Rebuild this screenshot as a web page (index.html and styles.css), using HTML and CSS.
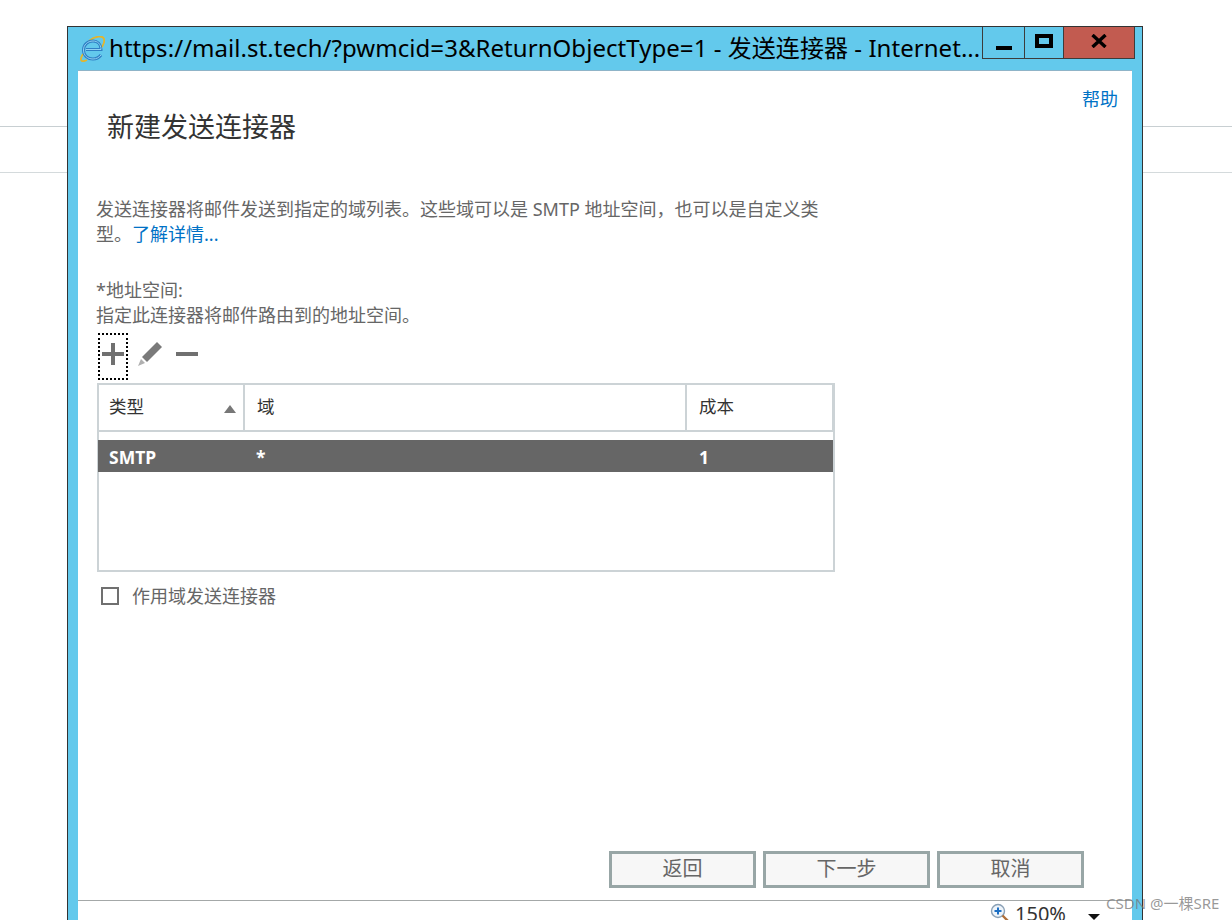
FILE: index.html
```html
<!DOCTYPE html>
<html lang="zh">
<head>
    <meta charset="UTF-8">
    <title>新建发送连接器</title>
    <link rel="stylesheet" href="styles.css">
</head>
<body>
    <div class="backdrop"></div>

    <div class="window">
        <div class="caption">
            <svg class="ie-logo" width="25" height="26" viewBox="0 0 25 26">
                <path d="M3 18 C-1 24 1 27 7 24 M9 5 C15 0 23 -1 24 3 C25 7 22 11 20 13" fill="none" stroke="#e3b52c" stroke-width="1.800"/>
                <path d="M6 13.500 H21 C21 8 17.500 5 13 5 C7.500 5 3.500 9 3.500 14 C3.500 19.500 7.500 23 13 23 C16.500 23 19 21.500 21 19" fill="none" stroke="#2f7fc4" stroke-width="3"/>
                <path d="M6 13.500 H21 C21 8 17.500 5 13 5 C7.500 5 3.500 9 3.500 14 C3.500 19.500 7.500 23 13 23 C16.500 23 19 21.500 21 19" fill="none" stroke="#8fd0f2" stroke-width="1"/>
            </svg>
            <span class="caption-text">https://mail.st.tech/?pwmcid=3&amp;ReturnObjectType=1 - 发送连接器 - Internet...</span>
        </div>
        <div class="caption-btns">
            <div class="cap-btn cap-min"><span class="min-glyph"></span></div>
            <div class="cap-btn cap-max"><span class="max-glyph"></span></div>
            <div class="cap-btn cap-close">
                <svg width="16" height="14" viewBox="0 0 16 14"><path d="M1.500 1 L14.500 13 M14.500 1 L1.500 13" stroke="#000" stroke-width="3.400" fill="none"/></svg>
            </div>
        </div>

        <div class="content">
            <a class="help" href="#">帮助</a>
            <h1>新建发送连接器</h1>
            <p class="desc">发送连接器将邮件发送到指定的域列表。这些域可以是 SMTP 地址空间，也可以是自定义类<br>型。<a href="#">了解详情...</a></p>
            <p class="field-label">*地址空间:<br>指定此连接器将邮件路由到的地址空间。</p>

            <div class="toolbar">
                <div class="tool tool-add">
                    <svg width="24" height="24" viewBox="0 0 24 24"><path d="M12 1 V23 M1 12 H23" stroke="#707070" stroke-width="4" fill="none"/></svg>
                </div>
                <svg class="tool-edit" width="26" height="26" viewBox="0 0 26 26">
                    <path d="M20 1 L25 6 L10 21 L5 16 Z" fill="#7a7a7a"/>
                    <path d="M4 18 L8 22 L1 25 Z" fill="#b0b0b0"/>
                </svg>
                <svg class="tool-del" width="22" height="4" viewBox="0 0 22 4"><rect width="22" height="4" fill="#707070"/></svg>
            </div>

            <div class="grid-box">
                <table class="grid">
                    <thead>
                        <tr>
                            <th class="col-type">类型<span class="sort-up"></span></th>
                            <th class="col-domain">域</th>
                            <th class="col-cost">成本</th>
                        </tr>
                    </thead>
                    <tbody>
                        <tr class="selected">
                            <td>SMTP</td>
                            <td class="cell-domain">*</td>
                            <td class="cell-cost">1</td>
                        </tr>
                    </tbody>
                </table>
            </div>

            <label class="check-row"><span class="checkbox"></span>作用域发送连接器</label>

            <div class="buttons">
                <div class="btn btn-back">返回</div>
                <div class="btn btn-next">下一步</div>
                <div class="btn btn-cancel">取消</div>
            </div>

            <div class="statusbar">
                <svg class="zoom-icon" width="20" height="20" viewBox="0 0 20 20">
                    <circle cx="8" cy="8" r="6.500" fill="#eef4fa" stroke="#8aa0b5" stroke-width="1.400"/>
                    <path d="M8 4.500 V11.500 M4.500 8 H11.500" stroke="#1c6fc4" stroke-width="2"/>
                    <path d="M12.500 12.500 L18 18" stroke="#b0703a" stroke-width="2.400"/>
                </svg>
                <span class="zoom-val">150%</span>
                <span class="zoom-arrow"></span>
            </div>
        </div>
    </div>

    <div class="watermark">CSDN @一棵SRE</div>
</body>
</html>
```

FILE: styles.css
```css
html, body {
    margin: 0;
    height: 920px;
    overflow: hidden;
    background: #fff;
}
body {
    position: relative;
    font-family: "Noto Sans", "Noto Sans CJK SC", sans-serif;
    color: #666;
}
.backdrop {
    height: 45px;
    margin-top: 126px;
    border-top: 1px solid #c8cfd2;
    border-bottom: 1px solid #d4dadc;
}
.window {
    position: absolute;
    left: 67px;
    top: 26px;
    width: 1074px;
    height: 894px;
    border: 1px solid #333;
    border-bottom: 0;
    background: #63c9ec;
}
.caption {
    display: flex;
    align-items: center;
    height: 44px;
    padding-left: 12px;
    color: #000;
}
.ie-logo {
    flex: none;
    margin-right: 4px;
}
.caption-text {
    font-size: 24px;
    line-height: 42px;
    letter-spacing: 0.05px;
    margin-bottom: 2px;
    white-space: nowrap;
}
.caption-btns {
    position: absolute;
    top: 0;
    left: 914px;
    display: flex;
    height: 31px;
    border: 1px solid #3c3c3c;
    border-top: 0;
}
.cap-btn {
    display: flex;
    align-items: center;
    justify-content: center;
    height: 31px;
    border-left: 1px solid #3c3c3c;
}
.cap-btn:first-child {
    border-left: 0;
}
.cap-min { width: 41px; }
.cap-max { width: 38px; }
.cap-close { width: 70px; background: #c25b50; }
.min-glyph {
    width: 16px;
    height: 4px;
    margin-top: 10px;
    background: #000;
}
.max-glyph {
    width: 18px;
    height: 14px;
    border: 4px solid #000;
    box-sizing: border-box;
    margin-top: -4px;
}
.cap-close svg { margin-top: -3px; }

.content {
    position: relative;
    display: flex;
    flex-direction: column;
    height: 849px;
    margin: 0 10px;
    box-sizing: border-box;
    padding: 0 0 0 18px;
    background: #fff;
    box-shadow: 0 -1px 0 #8fb4c8;
}
a {
    color: #0072c6;
    text-decoration: none;
}
.help {
    position: absolute;
    top: 16px;
    right: 14px;
    font-size: 18px;
    line-height: 24px;
}
h1 {
    margin: 37px 0 0 11px;
    font-size: 27px;
    line-height: 38px;
    font-weight: 400;
    color: #333;
}
.desc {
    width: 740px;
    margin: 51px 0 0;
    font-size: 18px;
    line-height: 24.500px;
}
.field-label {
    margin: 32px 0 0;
    font-size: 18px;
    line-height: 25px;
}
.toolbar {
    display: flex;
    align-items: flex-start;
    margin: 5px 0 0 2px;
}
.tool-add {
    display: flex;
    justify-content: center;
    width: 26px;
    height: 36px;
    padding-top: 7px;
    border: 2px dotted #000;
}
.tool-edit {
    margin: 8px 0 0 9px;
}
.tool-del {
    margin: 19px 0 0 13px;
}
.grid-box {
    width: 734px;
    height: 185px;
    margin: 3px 0 0 1px;
    border: 2px solid #ccd3d6;
}
.grid {
    width: calc(100% + 2px);
    margin: 0 -1px;
    table-layout: fixed;
    border-collapse: collapse;
}
.col-type { width: 146px; }
.col-cost { width: 147px; }
.grid th {
    position: relative;
    height: 46px;
    padding: 0 0 4px 11px;
    border-right: 2px solid #ccd3d6;
    border-bottom: 2px solid #ccd3d6;
    box-sizing: border-box;
    font-size: 17.500px;
    font-weight: 400;
    text-align: left;
    color: #333;
}
.grid th.col-domain,
.grid th.col-cost {
    padding-left: 12px;
}
.sort-up {
    position: absolute;
    right: 7px;
    top: 20px;
    border-left: 6px solid transparent;
    border-right: 6px solid transparent;
    border-bottom: 8px solid #777;
}
.grid tbody::before {
    content: "";
    display: block;
    height: 8px;
}
.grid td {
    height: 32px;
    box-sizing: border-box;
    padding: 2px 0 0 11px;
    font-size: 17.500px;
    font-weight: 700;
    color: #fff;
    background: #666;
}
.grid td.cell-domain { padding-left: 12px; }
.grid td.cell-cost { padding-left: 13px; }
.check-row {
    display: flex;
    align-items: center;
    margin: 12px 0 0 5px;
    font-size: 18px;
    line-height: 24px;
}
.checkbox {
    width: 18px;
    height: 18px;
    box-sizing: border-box;
    margin: -1px 13px 0 0;
    border: 2px solid #707070;
}
.buttons {
    display: flex;
    gap: 7px;
    margin: auto 48px 12px auto;
}
.btn {
    height: 37px;
    box-sizing: border-box;
    border: 3px solid #98a6a6;
    background: #f7f7f7;
    font-size: 20px;
    line-height: 30px;
    text-align: center;
    color: #666;
}
.btn-back { width: 147px; }
.btn-next { width: 167px; }
.btn-cancel { width: 147px; }
.statusbar {
    display: flex;
    align-items: flex-start;
    height: 19px;
    margin-left: -18px;
    padding-left: 912px;
    border-top: 1px solid #a4a8a8;
    overflow: hidden;
    color: #333;
}
.zoom-icon {
    margin-top: 2px;
}
.zoom-val {
    margin-left: 5px;
    font-size: 20px;
    line-height: 26px;
}
.zoom-arrow {
    margin: 13px 0 0 22px;
    border-left: 6px solid transparent;
    border-right: 6px solid transparent;
    border-top: 6px solid #111;
}
.watermark {
    position: absolute;
    left: 1106px;
    top: 894px;
    font-size: 15px;
    line-height: 19px;
    color: rgba(120, 120, 120, 0.75);
}
```
